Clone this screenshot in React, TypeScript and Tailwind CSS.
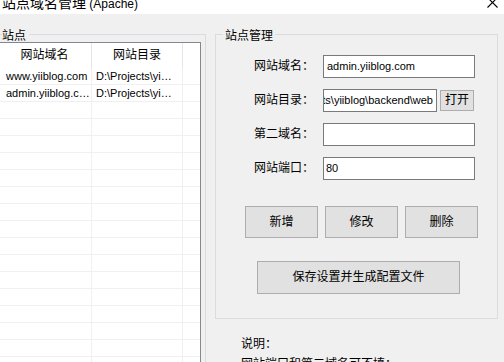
import React from "react";

const rows = [
  ["www.yiiblog.com", "D:\\Projects\\yiiblog\\frontend\\web"],
  ["admin.yiiblog.com", "D:\\Projects\\yiiblog\\backend\\web"],
];

function Field({ label, children }: { label: string; children: React.ReactNode }) {
  return (
    <div className="flex items-center h-[23px]">
      <div className="w-[98px] text-right text-[12px] leading-[13px] text-black whitespace-nowrap">{label}</div>
      <div className="ml-[9px] flex items-center">{children}</div>
    </div>
  );
}

function Btn({ children, className }: { children: React.ReactNode; className: string }) {
  return (
    <button className={"bg-[#e1e1e1] border border-[#adadad] text-[12px] leading-[13px] text-black flex items-center justify-center " + className}>
      {children}
    </button>
  );
}

export default function App() {
  const emptyRows = Array.from({ length: 18 });
  return (
    <div className="w-[504px] h-[362px] overflow-hidden bg-[#f0f0f0] flex flex-col font-['Liberation_Sans','Noto_Sans_CJK_SC',sans-serif] text-black">
      {/* title bar */}
      <div className="w-[504px] h-[14px] shrink-0 bg-white flex items-start">
        <div className="-mt-[5px] ml-[2px] whitespace-nowrap leading-[14px]">
          <span className="text-[14px] font-['Noto_Sans_CJK_SC',sans-serif]">站点域名管理</span>
          <span className="text-[12px]"> (Apache)</span>
        </div>
        <div className="ml-auto mr-[6px] w-[11px] h-[8px] overflow-hidden shrink-0">
          <svg width="11" height="11" viewBox="0 0 11 11" className="-mt-[3px]">
            <path d="M0.5 0.5 L10.5 10.5 M10.5 0.5 L0.5 10.5" stroke="#000000" strokeWidth="1.1" fill="none" />
          </svg>
        </div>
      </div>

      <div className="flex items-start">
        {/* left group */}
        <fieldset className="shrink-0 -ml-[5px] mt-[14px] w-[211px] h-[380px] border border-[#dcdcdc] pl-[1px] pr-[4px] pt-[1px]">
          <legend className="ml-[5px] pr-[3px] text-[12px] leading-[13px] font-['Noto_Sans_CJK_SC',sans-serif]">站点</legend>
          <div className="border border-[#828790] bg-white h-[360px] overflow-hidden">
            <div className="flex h-[25px] bg-white text-[12px] leading-[13px]">
              <div className="w-[94px] border-r border-[#e5e5e5] flex items-center justify-center">网站域名</div>
              <div className="w-[91px] border-r border-[#e5e5e5] flex items-center justify-center">网站目录</div>
              <div className="flex-1"></div>
            </div>
            {emptyRows.map((_, i) => {
              const r = rows[i];
              return (
                <div key={i} className="flex h-[17px] border-b border-[#f0f0f0] text-[11px] leading-[16px]">
                  <div className="w-[94px] border-r border-[#f0f0f0] pl-[8px] truncate">{r ? r[0] : ""}</div>
                  <div className="w-[91px] border-r border-[#f0f0f0] pl-[4px] pr-[8px] truncate">{r ? r[1] : ""}</div>
                  <div className="flex-1"></div>
                </div>
              );
            })}
          </div>
        </fieldset>

        {/* right column */}
        <div className="ml-[9px] flex flex-col">
          <fieldset className="mt-[14px] w-[283px] h-[291px] border border-[#dcdcdc] pt-[14px]">
            <legend className="ml-[7px] px-[2px] text-[12px] leading-[13px] font-['Noto_Sans_CJK_SC',sans-serif]">站点管理</legend>
            <div className="flex flex-col gap-[11px]">
              <Field label="网站域名：">
                <div className="w-[152px] h-[23px] bg-white border border-[#7a7a7a] text-[11px] leading-[21px] pl-[3px] whitespace-nowrap overflow-hidden">
                  admin.yiiblog.com
                </div>
              </Field>
              <Field label="网站目录：">
                <div className="w-[114px] h-[23px] bg-white border border-[#7a7a7a] text-[11px] leading-[21px] pr-[3px] whitespace-nowrap overflow-hidden flex justify-end">
                  <span className="shrink-0">D:\Projects\yiiblog\backend\web</span>
                </div>
                <Btn className="ml-[3px] w-[34px] h-[21px]">打开</Btn>
              </Field>
              <Field label="第二域名：">
                <div className="w-[152px] h-[23px] bg-white border border-[#7a7a7a]"></div>
              </Field>
              <Field label="网站端口：">
                <div className="w-[152px] h-[23px] bg-white border border-[#7a7a7a] text-[11px] leading-[21px] pl-[2px]">80</div>
              </Field>
            </div>
            <div className="flex gap-[7px] ml-[29px] mt-[26px]">
              <Btn className="w-[73px] h-[32px]">新增</Btn>
              <Btn className="w-[73px] h-[32px]">修改</Btn>
              <Btn className="w-[73px] h-[32px]">删除</Btn>
            </div>
            <Btn className="ml-[41px] mt-[23px] w-[203px] h-[33px]">保存设置并生成配置文件</Btn>
          </fieldset>
          <div className="ml-[26px] mt-[14px] text-[12px] leading-[20px] font-['Noto_Sans_CJK_SC',sans-serif]">
            <div>说明：</div>
            <div>网站端口和第二域名可不填：</div>
          </div>
        </div>
      </div>
    </div>
  );
}
